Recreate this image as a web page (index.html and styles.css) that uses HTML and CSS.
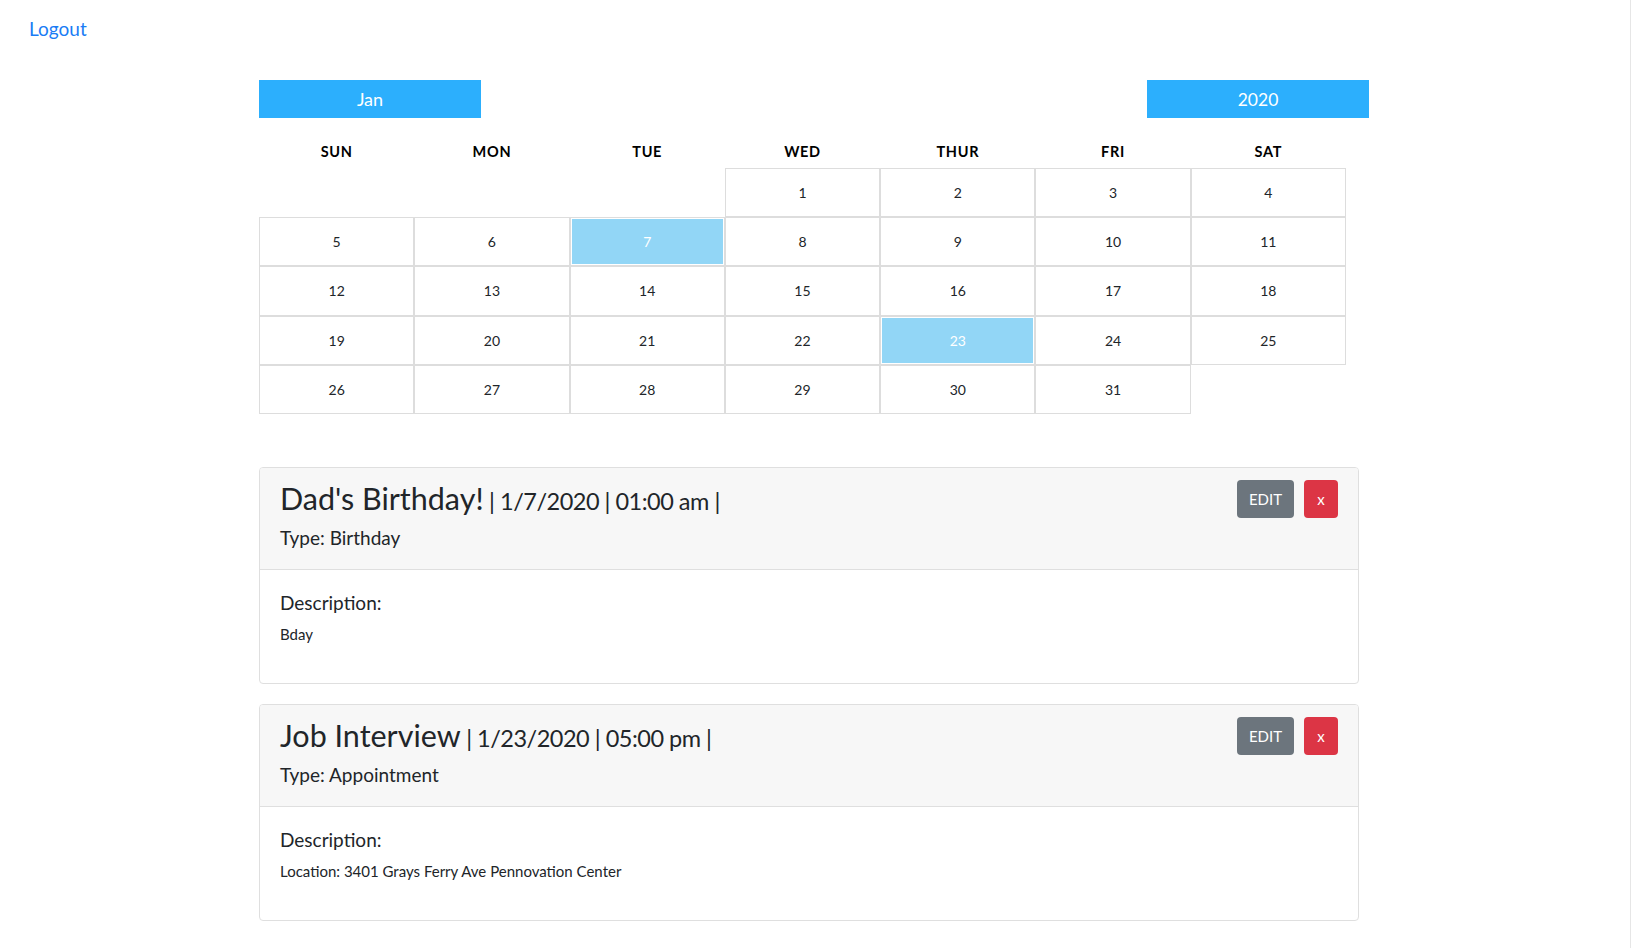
FILE: index.html
```html
<!DOCTYPE html>
<html lang="en">
<head>
<meta charset="utf-8">
<title>Calendar</title>
<link rel="stylesheet" href="styles.css">
</head>
<body>
<nav class="topbar"><a class="logout" href="#">Logout</a></nav>
<main class="main">
  <div class="picker-row">
    <button class="picker picker-month">Jan</button>
    <button class="picker picker-year">2020</button>
  </div>
  <div class="calendar">
    <div class="dow">SUN</div><div class="dow">MON</div><div class="dow">TUE</div><div class="dow">WED</div><div class="dow">THUR</div><div class="dow">FRI</div><div class="dow">SAT</div>
    <div class="blank"></div><div class="blank"></div><div class="blank"></div>
    <div class="day">1</div><div class="day">2</div><div class="day">3</div><div class="day">4</div>
    <div class="day">5</div><div class="day">6</div><div class="day event">7</div><div class="day">8</div><div class="day">9</div><div class="day">10</div><div class="day">11</div>
    <div class="day">12</div><div class="day">13</div><div class="day">14</div><div class="day">15</div><div class="day">16</div><div class="day">17</div><div class="day">18</div>
    <div class="day">19</div><div class="day">20</div><div class="day">21</div><div class="day">22</div><div class="day event">23</div><div class="day">24</div><div class="day">25</div>
    <div class="day">26</div><div class="day">27</div><div class="day">28</div><div class="day">29</div><div class="day">30</div><div class="day">31</div>
  </div>
  <section class="events">
    <article class="card">
      <header class="card-header">
        <div class="head-text">
          <h2 class="title"><span class="name">Dad's Birthday!</span><span class="meta"> | 1/7/2020 | 01:00 am |</span></h2>
          <p class="type">Type: Birthday</p>
        </div>
        <div class="actions">
          <button class="btn btn-edit">EDIT</button>
          <button class="btn btn-del">x</button>
        </div>
      </header>
      <div class="card-body">
        <h5 class="desc-label">Description:</h5>
        <p class="desc">Bday</p>
      </div>
    </article>
    <article class="card">
      <header class="card-header">
        <div class="head-text">
          <h2 class="title"><span class="name">Job Interview</span><span class="meta"> | 1/23/2020 | 05:00 pm |</span></h2>
          <p class="type">Type: Appointment</p>
        </div>
        <div class="actions">
          <button class="btn btn-edit">EDIT</button>
          <button class="btn btn-del">x</button>
        </div>
      </header>
      <div class="card-body">
        <h5 class="desc-label">Description:</h5>
        <p class="desc">Location: 3401 Grays Ferry Ave Pennovation Center</p>
      </div>
    </article>
  </section>
</main>
</body>
</html>
```
FILE: styles.css
```css
html {
  border-right: 1px solid #e6e6e6;
  min-height: 100%;
  box-sizing: border-box;
}
body {
  margin: 0;
  font-family: Lato, "Noto Sans", "Liberation Sans", sans-serif;
  color: #212529;
  background: #fff;
}
.topbar {
  padding: 17px 0 0 29px;
  height: 64px;
  box-sizing: border-box;
}
.logout {
  color: #1a7cf5;
  text-decoration: none;
  font-size: 19px;
  line-height: 24px;
}
.main {
  margin-left: 259px;
  width: 1110px;
  padding-top: 16px;
}
.picker-row {
  display: flex;
  justify-content: space-between;
}
.picker {
  height: 38px;
  border: 0;
  background: #2caffd;
  color: #fff;
  font-family: inherit;
  font-size: 17.5px;
  padding: 0;
  width: 222px;
}
.picker-month { font-size: 18px; }
.calendar {
  margin-top: 16px;
  width: 1087px;
  display: grid;
  grid-template-columns: repeat(7, 1fr);
  grid-template-rows: 34px repeat(5, 49.2px);
}
.dow {
  display: flex;
  align-items: center;
  justify-content: center;
  font-weight: 700;
  font-size: 14.5px;
  letter-spacing: 0.7px;
  color: #000;
}
.day {
  border: 1px solid #dddddd;
  display: flex;
  align-items: center;
  justify-content: center;
  font-size: 14px;
  color: #212529;
}
.day.event {
  background: #92d6f6;
  color: #fff;
  box-shadow: inset 0 0 0 1px #fff;
}
.events {
  margin-top: 53px;
  width: 1100px;
  display: flex;
  flex-direction: column;
  gap: 20px;
}
.card {
  border: 1px solid #dfdfdf;
  border-radius: 4px;
  overflow: hidden;
}
.card-header {
  background: #f7f7f7;
  border-bottom: 1px solid #dfdfdf;
  padding: 12px 20px;
  height: 102px;
  box-sizing: border-box;
  display: flex;
  justify-content: space-between;
  align-items: flex-start;
}
.title {
  margin: 0;
  font-weight: 400;
  line-height: 37px;
  color: #212529;
}
.name { font-size: 30.5px; }
.meta {
  font-size: 23.5px;
  letter-spacing: -0.5px;
}
.type {
  margin: 0;
  margin-top: 5px;
  font-size: 19px;
  line-height: 26px;
}
.actions {
  display: flex;
  gap: 10px;
}
.btn {
  height: 38px;
  border: 0;
  border-radius: 4px;
  color: #fff;
  font-family: inherit;
  font-size: 15px;
  padding: 0;
}
.btn-edit { background: #6c757d; width: 57px; }
.btn-del { background: #dc3545; width: 34px; }
.card-body {
  padding: 19px 20px 20px;
  height: 113px;
  box-sizing: border-box;
}
.desc-label {
  margin: 0;
  font-size: 19px;
  font-weight: 400;
  line-height: 28px;
}
.desc {
  margin: 7px 0 0;
  font-size: 15px;
  line-height: 20px;
}
```
